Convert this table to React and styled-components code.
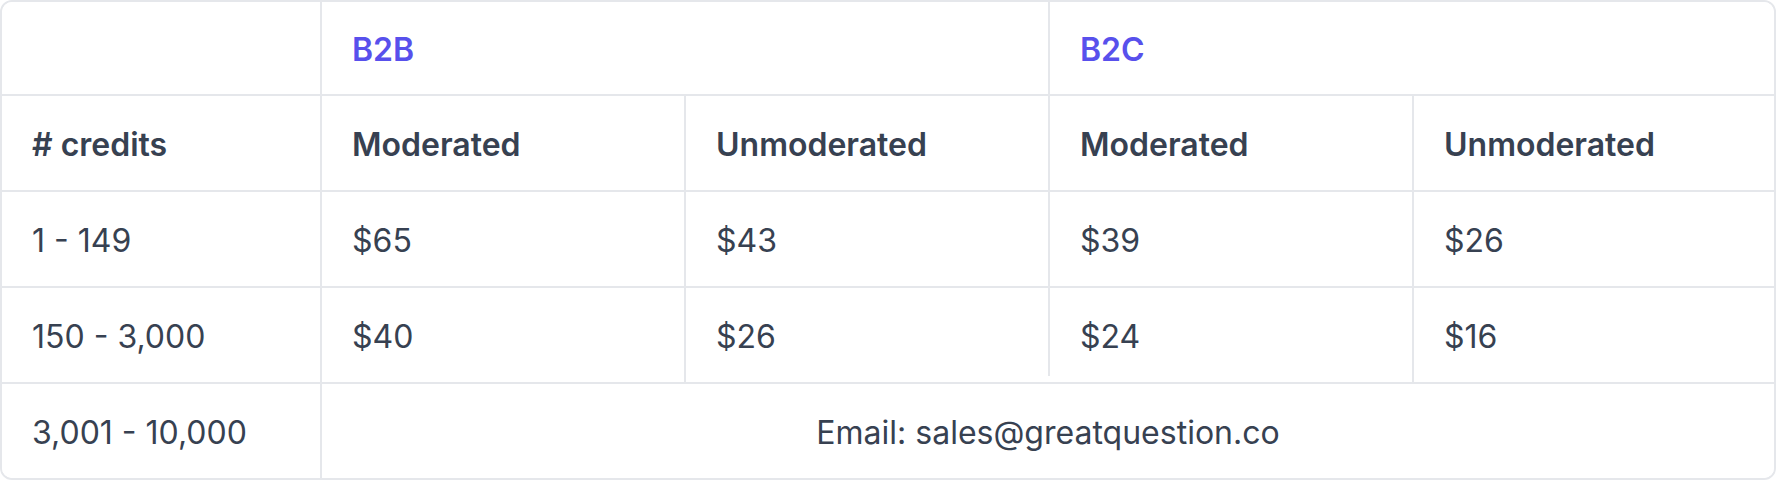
import React from "react";
import styled, { createGlobalStyle } from "styled-components";

const GlobalStyle = createGlobalStyle`
  html, body {
    margin: 0;
    padding: 0;
    background: #ffffff;
  }
  body {
    font-family: Inter, "Liberation Sans", Arial, sans-serif;
  }
`;

const Table = styled.div`
  box-sizing: border-box;
  width: 1776px;
  height: 480px;
  border: 2px solid #e5e7eb;
  border-radius: 12px;
  overflow: hidden;
  display: grid;
  grid-template-columns: 318px 364px 364px 364px 1fr;
  grid-template-rows: 92px repeat(4, 96px);
  background: #ffffff;
`;

const Cell = styled.div`
  box-sizing: border-box;
  display: flex;
  align-items: center;
  justify-content: ${(p) => (p.$center ? "center" : "flex-start")};
  padding: 4px 30px 0;
  grid-column: ${(p) => p.$span || "auto"};
  border-top: ${(p) => (p.$first ? "none" : "2px solid #e5e7eb")};
  border-left: ${(p) => (p.$lead || p.$cut ? "none" : "2px solid #e5e7eb")};
  padding-left: ${(p) => (p.$cut ? "32px" : "30px")};
  background: ${(p) =>
    p.$cut
      ? "linear-gradient(#e5e7eb, #e5e7eb) left top / 2px calc(100% - 6px) no-repeat #fff"
      : "#fff"};
  font-size: 32px;
  line-height: 48px;
  font-weight: ${(p) => (p.$head ? 600 : 400)};
  color: ${(p) => (p.$accent ? "#5850ec" : "#374151")};
  white-space: nowrap;
`;

const rows = [
  ["1 - 149", "$65", "$43", "$39", "$26"],
  ["150 - 3,000", "$40", "$26", "$24", "$16"],
];

export default function App() {
  return (
    <>
      <GlobalStyle />
      <Table>
        <Cell $first $lead />
        <Cell $first $head $accent $span="span 2">
          B2B
        </Cell>
        <Cell $first $head $accent $span="span 2">
          B2C
        </Cell>

        <Cell $lead $head># credits</Cell>
        <Cell $head>Moderated</Cell>
        <Cell $head>Unmoderated</Cell>
        <Cell $head>Moderated</Cell>
        <Cell $head>Unmoderated</Cell>

        {rows.map((row, r) =>
          row.map((value, i) => (
            <Cell
              key={`${r}-${i}`}
              $lead={i === 0}
              $cut={r === 1 && i === 3}
            >
              {value}
            </Cell>
          ))
        )}

        <Cell $lead>3,001 - 10,000</Cell>
        <Cell $span="span 4" $center>
          Email: sales@greatquestion.co
        </Cell>
      </Table>
    </>
  );
}
